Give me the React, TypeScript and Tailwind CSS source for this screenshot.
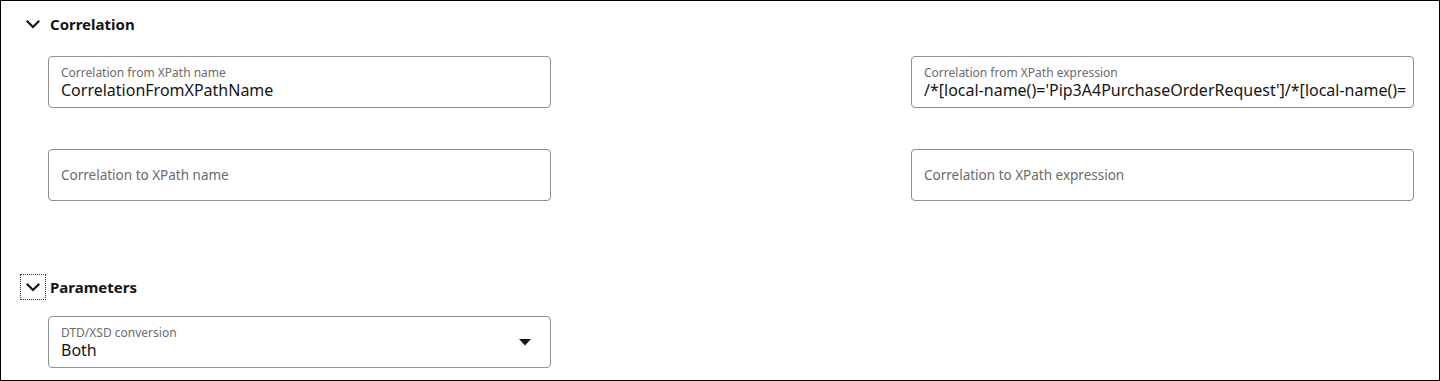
import React from 'react'

const font = { fontFamily: '"Noto Sans", "Liberation Sans", sans-serif' }

function Chevron() {
  return (
    <svg width="14" height="10" viewBox="0 0 14 10" fill="none">
      <path d="M1.5 2.5 L7 8 L12.5 2.5" stroke="#161513" strokeWidth="2.2" strokeLinecap="square" />
    </svg>
  )
}

function SectionHeader({ title, focused }: { title: string; focused?: boolean }) {
  return (
    <div className="flex items-center h-[26px] pl-[19px]">
      <div
        className={
          'w-[26px] h-[26px] flex items-center justify-center ' +
          (focused ? 'border border-dotted border-[#333]' : 'border border-transparent')
        }
      >
        <Chevron />
      </div>
      <span className="ml-[4px] text-[15px] font-bold text-[#161513]">{title}</span>
    </div>
  )
}

function Field({ label, value, select }: { label: string; value?: string; select?: boolean }) {
  return (
    <div className="relative h-[52px] border border-[#8f8f8f] rounded-[4px] bg-white px-[12px] overflow-hidden">
      {value ? (
        <div className="pt-[8px]">
          <div className="text-[12px] leading-[15px] text-[#6b6b6b]">{label}</div>
          <div className="text-[16px] leading-[21px] text-[#161513] whitespace-nowrap">{value}</div>
        </div>
      ) : (
        <div className="h-full flex items-center text-[13.5px] text-[#6b6b6b]">{label}</div>
      )}
      {select && (
        <svg className="absolute right-[19px] top-[22px]" width="12" height="7" viewBox="0 0 12 7">
          <path d="M0 0 H12 L6 6.5 Z" fill="#161513" />
        </svg>
      )}
    </div>
  )
}

export default function App() {
  return (
    <div style={font} className="w-[1440px] h-[381px] border border-black bg-white overflow-hidden">
      <div className="pt-[10px]">
        <SectionHeader title="Correlation" />
        <div className="mt-[19px] ml-[47px] w-[1366px] grid grid-cols-[503px_503px] justify-between gap-y-[41px]">
          <Field label="Correlation from XPath name" value="CorrelationFromXPathName" />
          <Field
            label="Correlation from XPath expression"
            value="/*[local-name()='Pip3A4PurchaseOrderRequest']/*[local-name()="
          />
          <Field label="Correlation to XPath name" />
          <Field label="Correlation to XPath expression" />
        </div>
        <div className="mt-[73px]">
          <SectionHeader title="Parameters" focused />
        </div>
        <div className="mt-[16px] ml-[47px] w-[503px]">
          <Field label="DTD/XSD conversion" value="Both" select />
        </div>
      </div>
    </div>
  )
}
